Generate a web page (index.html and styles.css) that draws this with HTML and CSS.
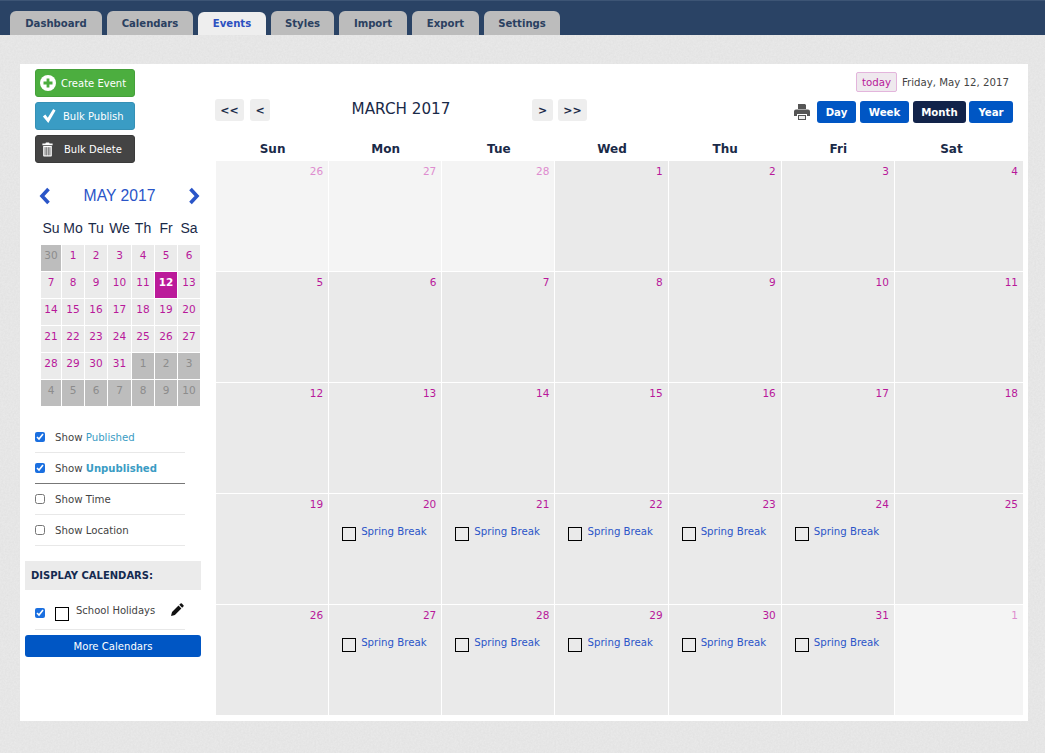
FILE: index.html
```html
<!DOCTYPE html>
<html lang="en">
<head>
<meta charset="utf-8">
<title>Events</title>
<link rel="stylesheet" href="styles.css">
</head>
<body>
<nav class="topbar">
  <a class="tab">Dashboard</a><a class="tab">Calendars</a><a class="tab active">Events</a><a class="tab">Styles</a><a class="tab">Import</a><a class="tab">Export</a><a class="tab">Settings</a>
</nav>
<main class="panel">
  <aside class="sidebar">
    <div class="actions">
      <button class="action green"><svg class="ic" width="16" height="16" viewBox="0 0 16 16"><circle cx="8" cy="8" r="8" fill="#fff"/><path d="M6.600 3.500h2.800v3.100h3.100v2.800H9.400v3.100H6.600V9.400H3.500V6.600h3.100z" fill="#4cae3f"/></svg><span>Create Event</span></button>
      <button class="action blue"><svg class="ic" width="14" height="16" viewBox="0 0 16 18"><path d="M1 9.500l2.800-2.200 2.800 3.800L12.800 1l2.700 1.700L7.200 17z" fill="#fff"/></svg><span>Bulk Publish</span></button>
      <button class="action dark"><svg class="ic" width="11" height="15" viewBox="0 0 14 18"><path d="M5 0h4l.7 1.500h3.800v2H.5v-2h3.800zM1.500 4.500h11V17a1 1 0 0 1-1 1h-9a1 1 0 0 1-1-1z" fill="#fff"/><path d="M3.900 6v10.500M6 6v10.500M8 6v10.500M10.100 6v10.500" stroke="#444" stroke-width="1"/></svg><span class="wide">Bulk Delete</span></button>
    </div>
    <div class="mini-head">
      <svg width="12" height="18" viewBox="0 0 12 18"><path d="M9.500 2L3 9l6.500 7" fill="none" stroke="#2a55c8" stroke-width="3.600"/></svg>
      <span>MAY 2017</span>
      <svg width="12" height="18" viewBox="0 0 12 18"><path d="M2.500 2L9 9l-6.500 7" fill="none" stroke="#2a55c8" stroke-width="3.600"/></svg>
    </div>
    <div class="mini-days"><span>Su</span><span>Mo</span><span>Tu</span><span>We</span><span>Th</span><span>Fr</span><span>Sa</span></div>
    <div class="mini-grid">
      <span class="off">30</span><span>1</span><span>2</span><span>3</span><span>4</span><span>5</span><span>6</span>
      <span>7</span><span>8</span><span>9</span><span>10</span><span>11</span><span class="now">12</span><span>13</span>
      <span>14</span><span>15</span><span>16</span><span>17</span><span>18</span><span>19</span><span>20</span>
      <span>21</span><span>22</span><span>23</span><span>24</span><span>25</span><span>26</span><span>27</span>
      <span>28</span><span>29</span><span>30</span><span>31</span><span class="off">1</span><span class="off">2</span><span class="off">3</span>
      <span class="off">4</span><span class="off">5</span><span class="off">6</span><span class="off">7</span><span class="off">8</span><span class="off">9</span><span class="off">10</span>
    </div>
    <div class="options">
      <label class="opt"><input type="checkbox" checked><span>Show <em>Published</em></span></label>
      <label class="opt strong"><input type="checkbox" checked><span>Show <b>Unpublished</b></span></label>
      <label class="opt"><input type="checkbox"><span>Show Time</span></label>
      <label class="opt"><input type="checkbox"><span>Show Location</span></label>
    </div>
    <h2 class="cal-title">DISPLAY CALENDARS:</h2>
    <div class="cal-row">
      <input type="checkbox" checked>
      <i class="swatch"></i>
      <span class="cal-name">School Holidays</span>
      <svg class="pencil" width="13" height="13" viewBox="0 0 14 14"><path d="M10.300.6a1 1 0 0 1 1.400 0l1.700 1.700a1 1 0 0 1 0 1.400L12 5.100 8.900 2zM8.100 2.800l3.100 3.100-7 7L0 14l1.100-4.200z" fill="#111"/></svg>
    </div>
    <button class="more">More Calendars</button>
  </aside>
  <section class="main">
    <div class="today-row"><button class="today">today</button><span>Friday, May 12, 2017</span></div>
    <div class="toolbar">
      <div class="nav"><button class="navbtn w29">&lt;&lt;</button><button class="navbtn w20">&lt;</button></div>
      <h1 class="month">MARCH 2017</h1>
      <div class="nav"><button class="navbtn w21">&gt;</button><button class="navbtn w29">&gt;&gt;</button></div>
      <div class="views">
        <svg class="print" width="16" height="16" viewBox="0 0 16 16"><path d="M4 0h7l1 1v4H4zM2 5.500h12a2 2 0 0 1 2 2V12h-3v-2H3v2H0V7.500a2 2 0 0 1 2-2z" fill="#555"/><path d="M4 11h8v5H4z" fill="#555"/><path d="M5 12h6v3H5z" fill="#eee"/></svg>
        <button class="view w39">Day</button><button class="view w49">Week</button><button class="view cur w53">Month</button><button class="view w44">Year</button>
      </div>
    </div>
    <div class="dow"><span>Sun</span><span>Mon</span><span>Tue</span><span>Wed</span><span>Thu</span><span>Fri</span><span>Sat</span></div>
    <div class="grid">
      <div class="cell other">26</div><div class="cell other">27</div><div class="cell other">28</div><div class="cell">1</div><div class="cell">2</div><div class="cell">3</div><div class="cell">4</div>
      <div class="cell">5</div><div class="cell">6</div><div class="cell">7</div><div class="cell">8</div><div class="cell">9</div><div class="cell">10</div><div class="cell">11</div>
      <div class="cell">12</div><div class="cell">13</div><div class="cell">14</div><div class="cell">15</div><div class="cell">16</div><div class="cell">17</div><div class="cell">18</div>
      <div class="cell">19</div>
      <div class="cell">20<a class="event"><i class="swatch"></i>Spring Break</a></div>
      <div class="cell">21<a class="event"><i class="swatch"></i>Spring Break</a></div>
      <div class="cell">22<a class="event"><i class="swatch"></i>Spring Break</a></div>
      <div class="cell">23<a class="event"><i class="swatch"></i>Spring Break</a></div>
      <div class="cell">24<a class="event"><i class="swatch"></i>Spring Break</a></div>
      <div class="cell">25</div>
      <div class="cell">26</div>
      <div class="cell">27<a class="event"><i class="swatch"></i>Spring Break</a></div>
      <div class="cell">28<a class="event"><i class="swatch"></i>Spring Break</a></div>
      <div class="cell">29<a class="event"><i class="swatch"></i>Spring Break</a></div>
      <div class="cell">30<a class="event"><i class="swatch"></i>Spring Break</a></div>
      <div class="cell">31<a class="event"><i class="swatch"></i>Spring Break</a></div>
      <div class="cell other">1</div>
    </div>
  </section>
</main>
</body>
</html>
```
FILE: styles.css
```css
* { box-sizing: border-box; }
html, body { height: 100%; }
body {
  margin: 0;
  background-color: #e9e9e9;
  background-image: url("data:image/svg+xml,%3Csvg xmlns='http://www.w3.org/2000/svg' width='240' height='240'%3E%3Cfilter id='n'%3E%3CfeTurbulence type='fractalNoise' baseFrequency='.55' numOctaves='3' stitchTiles='stitch'/%3E%3CfeColorMatrix values='0 0 0 0 .5 0 0 0 0 .5 0 0 0 0 .5 0 0 0 .22 -.04'/%3E%3C/filter%3E%3Crect width='240' height='240' filter='url(%23n)'/%3E%3C/svg%3E");
  font-family: "DejaVu Sans", Verdana, sans-serif;
  font-size: 10.2px;
  color: #333;
  overflow: hidden;
}
button { font-family: inherit; border: 0; padding: 0; cursor: pointer; }

.topbar {
  height: 35px;
  background: #2a4365;
  border-top: 1px solid #3d5575;
  padding: 10px 0 0 10px;
  display: grid;
  grid-template-columns: 92px 86px 68px 63px 68px 67px 76px;
  align-items: end;
  gap: 5px;
}
.tab {
  height: 24px;
  background: #bcbcbc;
  border-radius: 6px 6px 0 0;
  color: #2a4060;
  font-weight: 700;
  font-size: 10.1px;
  line-height: 25px;
  text-align: center;
}
.tab.active { height: 23px; background: #eeeeee; color: #2c50c0; line-height: 24px; }

.panel {
  margin: 29px 17px 0 20px;
  width: 1008px;
  height: 657px;
  background: #fff;
  display: flex;
}
.sidebar { width: 195px; flex: none; padding: 5px 0 0 5px; }
.actions { display: flex; flex-direction: column; gap: 5px; padding-left: 10px; }
.action {
  width: 100px;
  height: 28px;
  border-radius: 3px;
  color: #fff;
  font-size: 10px;
  display: flex;
  align-items: center;
  padding-left: 4px;
  gap: 5px;
}
.action .wide { margin-left: 6px; }
.action .ic { flex: none; }
.green { background: #4cae3f; border: 1px solid #45a03a; }
.blue { background: #3a9cc4; border: 1px solid #3590b5; padding-left: 6px; gap: 7px; }
.dark { background: #444; border: 1px solid #3a3a3a; padding-left: 6px; }

.mini-head {
  margin: 24px 0 0 14px;
  width: 161px;
  height: 18px;
  display: flex;
  align-items: center;
  justify-content: space-between;
  color: #2a55c8;
  font: 15.700px "Liberation Sans", Arial, sans-serif;
}
.mini-days {
  margin: 15px 0 0 16px;
  display: grid;
  grid-template-columns: 20px 22px 22px 23px 22px 22px 22px;
  gap: 1px;
  color: #1a2a48;
  font: 14px/16px "Liberation Sans", Arial, sans-serif;
  text-align: center;
  white-space: nowrap;
}
.mini-grid {
  margin: 9px 0 0 16px;
  display: grid;
  grid-template-columns: 20px 22px 22px 23px 22px 22px 22px;
  grid-auto-rows: 26px;
  gap: 1px;
  text-align: center;
  line-height: 21px;
  font-size: 10.5px;
}
.mini-grid span { background: #ebebeb; color: #b8189a; }
.mini-grid .off { background: #bdbdbd; color: #8c8c8c; }
.mini-grid .now { background: #bb1a9a; color: #fff; font-weight: 700; }

.options { margin: 16px 0 0 10px; width: 150px; }
.opt {
  height: 31px;
  display: flex;
  align-items: center;
  gap: 10px;
  border-bottom: 1px solid #e8e8e8;
  padding-bottom: 1px;
  color: #444;
}
.opt span { padding-top: 2px; }
.opt.strong { border-bottom-color: #777; }
.opt em { font-style: normal; color: #3a9cc4; }
.opt b { color: #3a9cc4; font-size: 10.1px; }
input[type="checkbox"] { width: 10px; height: 10px; margin: 0; accent-color: #1a6fe0; flex: none; }

.cal-title {
  margin: 15px 0 0 0;
  width: 176px;
  height: 29px;
  background: #ebebeb;
  color: #142a50;
  font-size: 10px;
  line-height: 29px;
  padding-left: 6px;
}
.cal-row {
  margin: 0 0 0 10px;
  width: 150px;
  height: 40px;
  border-bottom: 1px solid #e8e8e8;
  display: flex;
  align-items: center;
  color: #444;
  font-size: 10px;
}
.cal-row input { margin-top: 7px; }
.cal-row .swatch { margin: 8px 0 0 10px; }
.cal-name { margin: 2px 0 0 7px; flex: 1; white-space: nowrap; }
.pencil { margin: 0 1px 0 0; flex: none; }
.swatch {
  display: inline-block;
  width: 14px;
  height: 14px;
  border: 1px solid #000;
  flex: none;
}
.more {
  display: block;
  margin-top: 5px;
  width: 176px;
  height: 22px;
  border-radius: 3px;
  background: #0056c4;
  color: #fff;
  font-size: 10.1px;
}

.main { width: 813px; flex: none; }
.today-row {
  margin-top: 8px;
  height: 20px;
  display: flex;
  justify-content: flex-end;
  align-items: center;
  gap: 5px;
  padding-right: 19px;
  color: #444;
}
.today {
  width: 41px;
  height: 20px;
  background: #efe9ee;
  border: 1px solid #e3b5dc;
  border-radius: 2px;
  color: #b8189a;
  font-size: 10.2px;
}
.toolbar {
  margin-top: 7px;
  display: flex;
  align-items: flex-start;
  height: 39px;
  padding-right: 15px;
}
.nav { display: flex; gap: 6px; }
.nav + .month + .nav { gap: 5px; }
.navbtn {
  height: 22px;
  background: #eeeeee;
  border-radius: 3px;
  color: #1a2a48;
  font-weight: 700;
  font-size: 11px;
}
.w29 { width: 29px; }
.w20 { width: 20px; }
.w21 { width: 21px; }
.month {
  margin: 1px 0 0;
  flex: none;
  width: 262px;
  text-align: center;
  font-weight: 400;
  font-size: 15.200px;
  line-height: 19px;
  color: #1a2a48;
}
.views { margin: 2px 0 0 auto; display: flex; align-items: flex-start; gap: 4px; }
.print { margin: 3px 3px 0 0; }
.view {
  height: 22px;
  background: #0056c4;
  border-radius: 3px;
  color: #fff;
  font-weight: 700;
  font-size: 10.2px;
}
.view.cur { background: #12234a; }
.w39 { width: 39px; }
.w49 { width: 49px; }
.w53 { width: 53px; margin-right: -1px; }
.w44 { width: 44px; }

.dow {
  margin-left: 1px;
  height: 23px;
  display: grid;
  grid-template-columns: repeat(7, 113.150px);
  text-align: center;
  font-weight: 700;
  font-size: 12px;
  line-height: 22px;
  color: #1a2a48;
}
.grid {
  margin-left: 1px;
  width: 807px;
  height: 554px;
  display: grid;
  grid-template-columns: repeat(6, 112.17px) 1fr;
  grid-template-rows: repeat(5, 110px);
  gap: 1px;
}
.cell {
  background: #eaeaea;
  color: #b8189a;
  text-align: right;
  padding: 4px 5px 0 0;
  font-size: 10.5px;
  line-height: 13px;
}
.cell.other { background: #f4f4f4; color: #de8ccf; }
.event {
  display: flex;
  align-items: flex-start;
  gap: 5px;
  margin: 14px 0 0 13px;
  text-align: left;
  font-size: 10.2px;
  color: #2a55c8;
}
.event .swatch { margin-top: 2px; }
```
